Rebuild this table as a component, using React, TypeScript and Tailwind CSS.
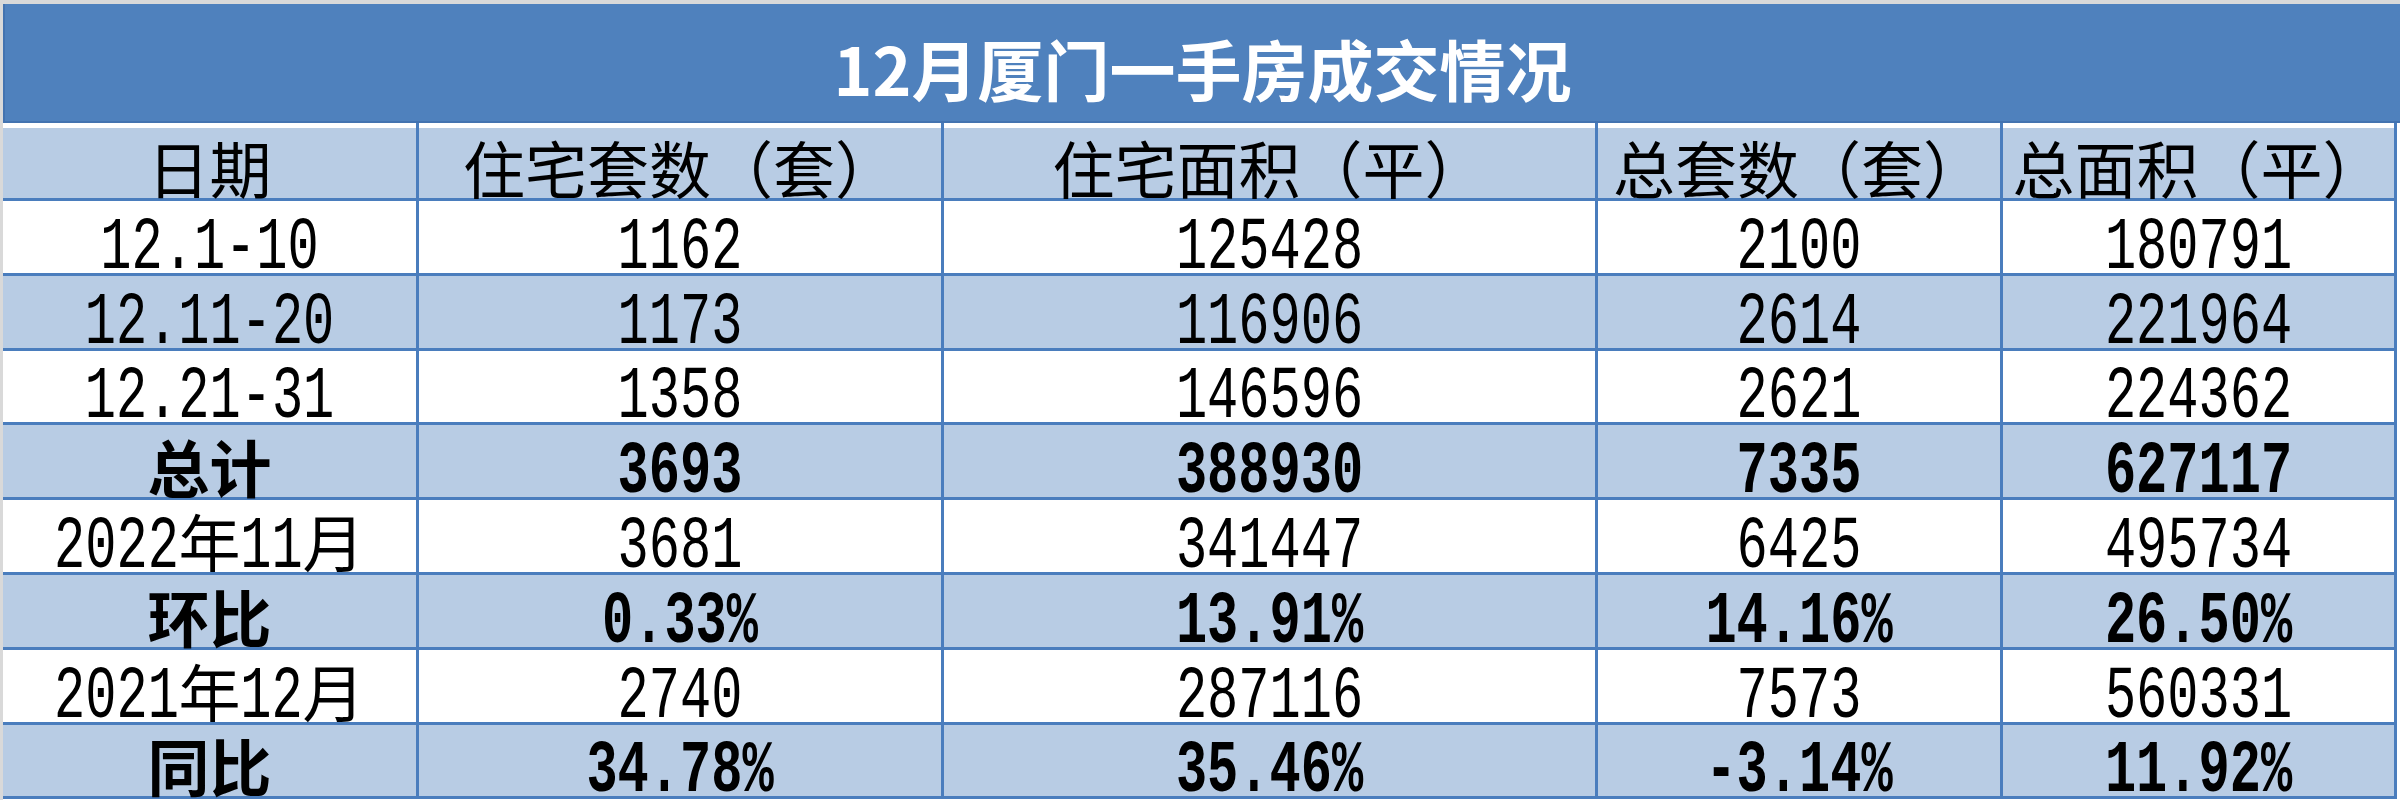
import React from "react";

const CW = 31;

function Txt({ s, bold }: { s: string; bold?: boolean }) {
  const runs = s.match(/[\x00-\x7f]+|[^\x00-\x7f]+/g) || [];
  return (
    <div className="flex items-baseline text-black">
      {runs.map((r, i) =>
        /^[\x00-\x7f]+$/.test(r) ? (
          <div key={i} className="flex justify-center" style={{ width: r.length * CW }}>
            <span
              className={
                "inline-block shrink-0 origin-[50%_32px] scale-y-[1.43] whitespace-pre font-['Liberation_Mono',monospace] text-[52px] leading-[36px] " +
                (bold ? "font-bold" : "font-normal")
              }
            >
              {r}
            </span>
          </div>
        ) : (
          <span
            key={i}
            className={
              "whitespace-pre font-['Noto_Sans_CJK_SC',sans-serif] text-[62px] leading-none " +
              (bold ? "font-bold" : "font-normal")
            }
          >
            {r}
          </span>
        )
      )}
    </div>
  );
}

const header = ["日期", "住宅套数（套）", "住宅面积（平）", "总套数（套）", "总面积（平）"];

const rows: { cells: string[]; bold?: boolean; shaded?: boolean }[] = [
  { cells: ["12.1-10", "1162", "125428", "2100", "180791"] },
  { cells: ["12.11-20", "1173", "116906", "2614", "221964"], shaded: true },
  { cells: ["12.21-31", "1358", "146596", "2621", "224362"] },
  { cells: ["总计", "3693", "388930", "7335", "627117"], bold: true, shaded: true },
  { cells: ["2022年11月", "3681", "341447", "6425", "495734"] },
  { cells: ["环比", "0.33%", "13.91%", "14.16%", "26.50%"], bold: true, shaded: true },
  { cells: ["2021年12月", "2740", "287116", "7573", "560331"] },
  { cells: ["同比", "34.78%", "35.46%", "-3.14%", "11.92%"], bold: true, shaded: true },
];

export default function App() {
  return (
    <div className="w-[2400px] h-[800px] overflow-hidden bg-[#d9d9d9] pt-[4px] pl-[3px]">
      <div className="h-full bg-white">
        <div className="h-[119px] bg-[#4f81bd] border-l-2 border-b-2 border-[#4373b0] flex justify-center pt-[30px]">
          <span className="font-['Noto_Sans_CJK_SC',sans-serif] font-bold text-[66px] leading-none text-white">
            12月厦门一手房成交情况
          </span>
        </div>
        <div className="w-[2394px] grid grid-cols-[413px_522px_651px_402px_391px] grid-rows-[75px_repeat(8,71.8px)] gap-[3px] bg-[#4a7dbd] pr-[3px] pb-[3px]">
          {header.map((h, i) => (
            <div key={i} className="flex items-end justify-center bg-[#b8cce4] border-t-[5px] border-white">
              <Txt s={h} />
            </div>
          ))}
          {rows.map((row, ri) =>
            row.cells.map((c, ci) => (
              <div
                key={ri + "-" + ci}
                className={"flex items-end justify-center " + (row.shaded ? "bg-[#b8cce4]" : "bg-white")}
              >
                <Txt s={c} bold={row.bold} />
              </div>
            ))
          )}
        </div>
      </div>
    </div>
  );
}
